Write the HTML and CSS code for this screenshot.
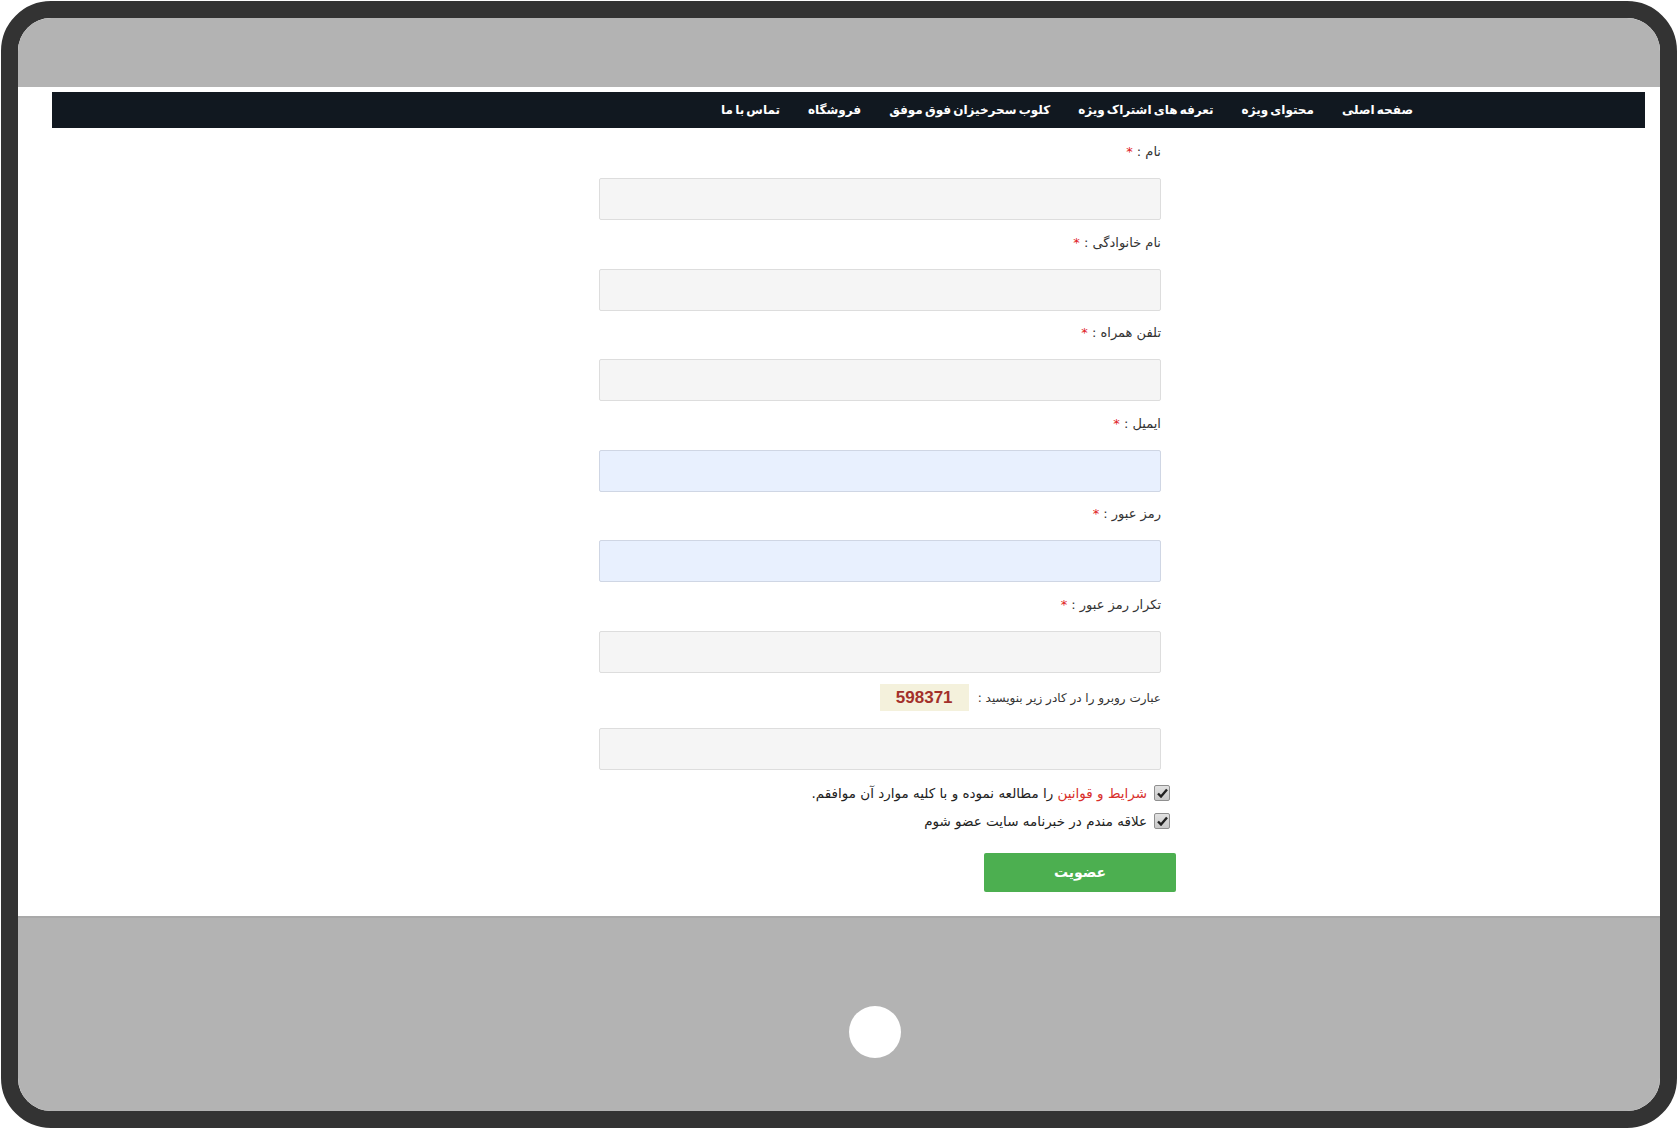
FILE: index.html
```html
<!DOCTYPE html>
<html lang="fa">
<head>
    <meta charset="UTF-8">
    <title>عضویت</title>
    <link rel="stylesheet" href="styles.css">
</head>
<body>
<div class="device">
    <div class="bezel-top"></div>
    <div class="screen">
        <!-- منوی بالا -->
        <ul class="menu">
            <li><a href="#">صفحه اصلی</a></li>
            <li><a href="#">محتوای ویژه</a></li>
            <li><a href="#">تعرفه های اشتراک ویژه</a></li>
            <li><a href="#">کلوب سحرخیزان فوق موفق</a></li>
            <li><a href="#">فروشگاه</a></li>
            <li><a href="#">تماس با ما</a></li>
        </ul>

        <!-- فرم ثبت نام -->
        <form class="register">
            <div class="field">
                <label>نام : <span class="req">*</span></label>
                <input type="text" class="box">
            </div>
            <div class="field">
                <label>نام خانوادگی : <span class="req">*</span></label>
                <input type="text" class="box">
            </div>
            <div class="field">
                <label>تلفن همراه : <span class="req">*</span></label>
                <input type="text" class="box">
            </div>
            <div class="field">
                <label>ایمیل : <span class="req">*</span></label>
                <input type="text" class="box filled">
            </div>
            <div class="field">
                <label>رمز عبور : <span class="req">*</span></label>
                <input type="password" class="box filled">
            </div>
            <div class="field">
                <label>تکرار رمز عبور : <span class="req">*</span></label>
                <input type="password" class="box">
            </div>
            <div class="captcha-row">
                <span>عبارت روبرو را در کادر زیر بنویسید :</span>
                <span class="captcha">598371</span>
            </div>
            <div class="field">
                <input type="text" class="box">
            </div>

            <div class="check-row">
                <span class="check"><svg width="11" height="10" viewBox="0 0 11 10"><path d="M1 5.5 L4 8.5 L10 1.5" fill="none" stroke="#222" stroke-width="2.4"/></svg></span>
                <span><a href="#" class="terms">شرایط و قوانین</a> را مطالعه نموده و با کلیه موارد آن موافقم.</span>
            </div>
            <div class="check-row">
                <span class="check"><svg width="11" height="10" viewBox="0 0 11 10"><path d="M1 5.5 L4 8.5 L10 1.5" fill="none" stroke="#222" stroke-width="2.4"/></svg></span>
                <span>علاقه مندم در خبرنامه سایت عضو شوم</span>
            </div>

            <div class="submit-row">
                <button type="button" class="btn">عضویت</button>
            </div>
        </form>
    </div>
    <div class="bezel-bottom">
        <span class="home"></span>
    </div>
</div>
</body>
</html>
```

FILE: styles.css
```css
*{
    margin: 0;
    padding: 0;
    box-sizing: border-box;
    text-decoration: none;
}
body{
    background: #fff;
    font-family: "DejaVu Sans", "Noto Sans", sans-serif;
    color: #333;
}
.device{
    margin: 1px 0 0 1px;
    width: 1676px;
    height: 1127px;
    border: 17px solid #333;
    border-radius: 50px;
    overflow: hidden;
    display: flex;
    flex-direction: column;
    background: #fff;
}
.bezel-top{
    height: 69px;
    background: #b3b3b3;
}
.screen{
    flex: 1;
    background: #fff;
    padding-top: 5px;
}
.bezel-bottom{
    height: 195px;
    background: #b3b3b3;
    border-top: 2px solid #a9a9a9;
    padding: 88px 0 0 831px;
}
.home{
    display: block;
    width: 52px;
    height: 52px;
    border-radius: 50%;
    background: #fff;
}

/* منو */
.menu{
    list-style: none;
    direction: rtl;
    display: flex;
    height: 36px;
    margin: 0 15px 0 34px;
    padding-right: 218px;
    background: #111820;
}
.menu li a{
    display: block;
    padding: 0 14px;
    line-height: 37px;
    font-size: 12px;
    font-weight: bold;
    word-spacing: -2px;
    color: #fff;
}

/* فرم */
.register{
    direction: rtl;
    width: 577px;
    margin: 13px 0 0 581px;
    font-size: 13px;
}
.field{
    padding-right: 15px;
    margin-bottom: 11.5px;
}
.field label{
    display: block;
    height: 22px;
    line-height: 22px;
    margin-bottom: 15px;
}
.req{
    color: #e0201c;
}
.box{
    display: block;
    width: 562px;
    height: 42px;
    background: #f5f5f5;
    border: 1px solid #ddd;
    border-radius: 2px;
    outline: none;
}
.box.filled{
    background: #e8f0fe;
    border-color: #cfd6e4;
}
.captcha-row{
    display: flex;
    align-items: center;
    gap: 9px;
    height: 27px;
    padding-right: 15px;
    margin: 0 0 17px;
    font-size: 12px;
}
.captcha{
    width: 89px;
    height: 27px;
    line-height: 27px;
    text-align: center;
    background: #f4f1dc;
    color: #a3302a;
    font-family: "Liberation Sans", sans-serif;
    font-weight: bold;
    font-size: 17px;
}
.check-row{
    display: flex;
    align-items: center;
    gap: 7px;
    height: 22px;
    padding-right: 6px;
    margin-bottom: 6px;
    font-size: 13.5px;
    color: #222;
}
.check-row:first-of-type{
    margin-top: 12px;
}
.check{
    display: flex;
    align-items: center;
    justify-content: center;
    width: 16px;
    height: 16px;
    border: 1px solid #8f8f8f;
    border-radius: 2px;
    background: linear-gradient(#e2e2e2, #c8c8c8);
}
.terms{
    color: #d8302c;
}
.submit-row{
    margin-top: 21px;
}
.btn{
    width: 192px;
    height: 39px;
    border: none;
    border-radius: 2px;
    background: #4caf50;
    color: #fff;
    font-family: "DejaVu Sans", sans-serif;
    font-size: 14px;
    font-weight: bold;
}
```
